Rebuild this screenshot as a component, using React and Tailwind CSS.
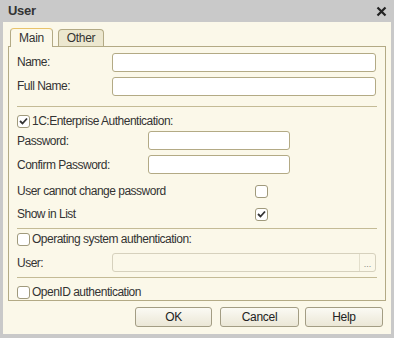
const Check = ({ checked }) => (
  <span className="w-[13px] h-[13px] rounded-[3px] border border-[#a09a7c] bg-white flex items-center justify-center shrink-0">
    {checked && (
      <svg width="9" height="8" viewBox="0 0 9 8">
        <path d="M1 4 L3.5 6.5 L8 1.5" fill="none" stroke="#333" strokeWidth="1.8" />
      </svg>
    )}
  </span>
);

const Field = ({ className = '' }) => (
  <div className={`h-[19px] rounded-[3px] border border-[#b3aa85] bg-white ${className}`} />
);

const Sep = () => <div className="h-px bg-[#c4bb96] mx-1" />;

const Btn = ({ children, w }) => (
  <button className={`${w} h-[20px] rounded-[3px] border border-[#a39d84] bg-gradient-to-b from-[#fbfaf4] to-[#ebe7d6] text-[12px] tracking-[-0.3px] text-[#222]`}>
    {children}
  </button>
);

export default function App() {
  return (
    <div
      className="w-[394px] h-[338px] bg-[#c9c9c9] flex flex-col text-[#333]"
      style={{ fontFamily: '"Liberation Sans", Arial, sans-serif' }}
    >
      <div className="h-[22px] flex items-center justify-between pl-[8px] pr-[7px]">
        <span className="text-[13px] font-bold text-[#333] tracking-[-0.3px]">User</span>
        <svg width="11" height="11" viewBox="0 0 11 11">
          <path d="M1.5 1.5 L9.5 9.5 M9.5 1.5 L1.5 9.5" stroke="#222" strokeWidth="2.2" />
        </svg>
      </div>
      <div className="flex-1 mx-[3px] mb-[4px] bg-[#fbf8e9] flex flex-col px-[5px] pt-[6px]">
        <div className="flex items-end h-[18px] pl-[2px] gap-[5px] text-[12px] tracking-[-0.3px]">
          <div className="relative z-10 h-[19px] w-[43px] -mb-px border border-[#b3aa85] border-b-0 border-t-[#e8c36a] rounded-t-[4px] bg-[#fbf8e9] flex items-center justify-center">
            Main
          </div>
          <div className="h-[17px] w-[46px] border border-[#b3aa85] border-b-0 rounded-t-[4px] bg-[#ece7cf] flex items-center justify-center">
            Other
          </div>
        </div>
        <div className="h-[255px] border border-[#b3aa85] flex flex-col px-[4px] pt-[5px] text-[12px] tracking-[-0.5px]">
          <div className="flex items-center h-[20px] pl-[4px]">
            <span className="w-[95px]">Name:</span>
            <Field className="w-[264px]" />
          </div>
          <div className="flex items-center h-[20px] mt-[4px] pl-[4px]">
            <span className="w-[95px]">Full Name:</span>
            <Field className="w-[264px]" />
          </div>
          <div className="mt-[10px]"><Sep /></div>
          <div className="flex items-center gap-[2px] h-[14px] mt-[7px] pl-[4px]">
            <Check checked />
            <span>1C:Enterprise Authentication:</span>
          </div>
          <div className="flex items-center h-[19px] mt-[3px] pl-[4px]">
            <span className="w-[131px]">Password:</span>
            <Field className="w-[142px]" />
          </div>
          <div className="flex items-center h-[19px] mt-[5px] pl-[4px]">
            <span className="w-[131px]">Confirm Password:</span>
            <Field className="w-[142px]" />
          </div>
          <div className="flex items-center h-[18px] mt-[8px] pl-[4px]">
            <span className="w-[238px]">User cannot change password</span>
            <Check />
          </div>
          <div className="flex items-center h-[18px] mt-[5px] pl-[4px]">
            <span className="w-[238px]">Show in List</span>
            <Check checked />
          </div>
          <div className="mt-[5px]"><Sep /></div>
          <div className="flex items-center gap-[2px] h-[14px] mt-[3px] pl-[4px]">
            <Check />
            <span>Operating system authentication:</span>
          </div>
          <div className="flex items-center h-[19px] mt-[7px] pl-[4px]">
            <span className="w-[95px]">User:</span>
            <div className="w-[264px] h-[19px] rounded-[3px] border border-[#d6d1bd] bg-[#fbf8e9] flex justify-end">
              <div className="w-[16px] border-l border-[#e3dfcc] text-[9px] text-[#888] flex items-end justify-center pb-[2px] leading-none tracking-normal">...</div>
            </div>
          </div>
          <div className="mt-[5px]"><Sep /></div>
          <div className="flex items-center gap-[2px] h-[14px] mt-[7px] pl-[4px]">
            <Check />
            <span>OpenID authentication</span>
          </div>
        </div>
        <div className="flex justify-end mt-[6px] pr-[3px]">
          <Btn w="w-[77px]">OK</Btn>
          <div className="w-[8px]" />
          <Btn w="w-[79px]">Cancel</Btn>
          <div className="w-[6px]" />
          <Btn w="w-[78px]">Help</Btn>
        </div>
      </div>
    </div>
  );
}
